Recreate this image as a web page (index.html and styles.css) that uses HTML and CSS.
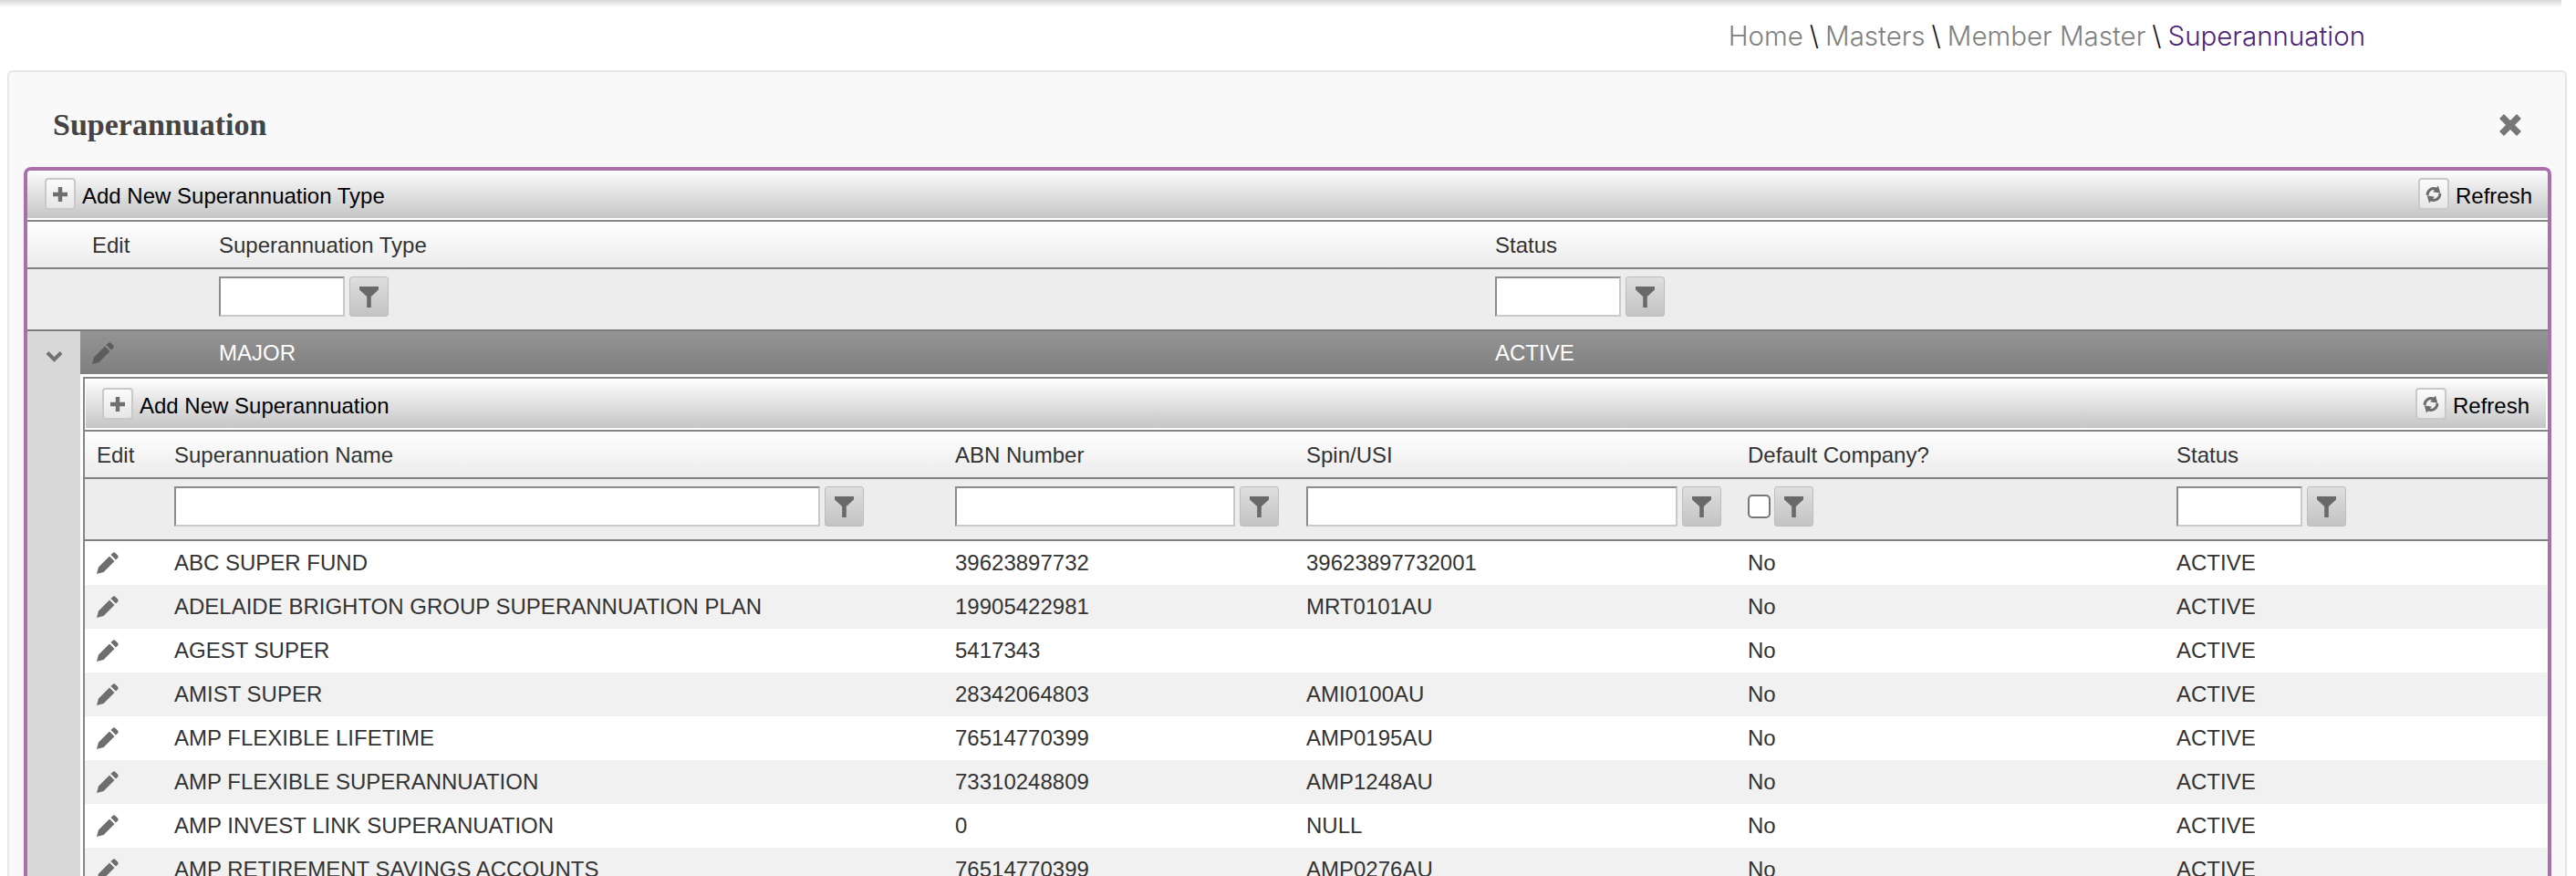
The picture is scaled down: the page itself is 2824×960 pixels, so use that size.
FILE: index.html
```html
<!DOCTYPE html>
<html lang="en">
<head>
<meta charset="utf-8">
<title>Superannuation</title>
<link rel="stylesheet" href="styles.css">
</head>
<body>
<svg class="sprites" aria-hidden="true">
  <symbol id="i-pencil" viewBox="0 0 24 24"><path d="M0 24l2-7.500L14 4.500l5.500 5.500L7.500 22zM15.500 3l1.800-1.800a2.500 2.500 0 0 1 3.500 0l2 2a2.500 2.500 0 0 1 0 3.500L21 8.500z"/></symbol>
  <symbol id="i-funnel" viewBox="0 0 21 23"><path d="M0 0h21v3.500l-8.200 7.500v12H8.200V11L0 3.500z"/></symbol>
  <symbol id="i-plus" viewBox="0 0 18 18"><path d="M6.500 0h5v6.500H18v5h-6.500V18h-5v-6.500H0v-5h6.500z"/></symbol>
  <symbol id="i-refresh" viewBox="0 0 22 22">
    <path d="M3.500 12A7.500 7.500 0 0 1 14.500 4.800M18.500 10A7.500 7.500 0 0 1 7.500 17.200" fill="none" stroke="currentColor" stroke-width="3.200"/>
    <path d="M16.500 .5L19 9.500l-9-1.500zM5.500 21.500L3 12.500l9 1.500z" fill="currentColor"/>
  </symbol>
  <symbol id="i-chevron" viewBox="0 0 19 13"><path d="M2 2.500l7.500 7.500L17 2.500" fill="none" stroke="currentColor" stroke-width="4"/></symbol>
  <symbol id="i-close" viewBox="0 0 24 24"><path d="M2.500 2.500l19 19M21.500 2.500l-19 19" fill="none" stroke="currentColor" stroke-width="7"/></symbol>
</svg>

<div class="page">
  <div class="topbar"></div>
  <nav class="crumbs">
    <span class="crumb">Home</span><span class="sep">\</span>
    <span class="crumb">Masters</span><span class="sep">\</span>
    <span class="crumb">Member Master</span><span class="sep">\</span>
    <span class="crumb current">Superannuation</span>
  </nav>

  <section class="panel">
    <header class="panel-head">
      <h1 class="panel-title">Superannuation</h1>
      <svg class="close"><use href="#i-close"/></svg>
    </header>

    <div class="grid-frame">
      <div class="toolbar">
        <span class="tool"><span class="icon-btn"><svg class="i-plus"><use href="#i-plus"/></svg></span><span class="tool-label">Add New Superannuation Type</span></span>
        <span class="tool"><span class="icon-btn narrow"><svg class="i-refresh"><use href="#i-refresh"/></svg></span><span class="tool-label">Refresh</span></span>
      </div>

      <div class="cols-outer head">
        <div></div><div class="pad-edit">Edit</div><div>Superannuation Type</div><div>Status</div>
      </div>
      <div class="cols-outer filters">
        <div></div><div></div>
        <div class="filter"><input class="w-type" type="text" aria-label="Superannuation Type"><span class="filter-btn"><svg class="i-funnel"><use href="#i-funnel"/></svg></span></div>
        <div class="filter"><input class="w-type" type="text" aria-label="Status"><span class="filter-btn"><svg class="i-funnel"><use href="#i-funnel"/></svg></span></div>
      </div>

      <div class="cols-outer master">
        <div class="expander"><svg class="i-chevron"><use href="#i-chevron"/></svg></div>
        <div class="pad-edit"><svg class="i-pencil dark"><use href="#i-pencil"/></svg></div>
        <div>MAJOR</div><div>ACTIVE</div>
      </div>

      <div class="detail">
        <div class="detail-gutter"></div>
        <div class="nested">
          <div class="toolbar">
            <span class="tool"><span class="icon-btn"><svg class="i-plus"><use href="#i-plus"/></svg></span><span class="tool-label">Add New Superannuation</span></span>
            <span class="tool"><span class="icon-btn narrow"><svg class="i-refresh"><use href="#i-refresh"/></svg></span><span class="tool-label">Refresh</span></span>
          </div>

          <div class="cols-inner head">
            <div class="pad-edit">Edit</div><div>Superannuation Name</div><div>ABN Number</div><div>Spin/USI</div><div>Default Company?</div><div>Status</div>
          </div>
          <div class="cols-inner filters ruled">
            <div></div>
            <div class="filter"><input class="w-name" type="text" aria-label="Superannuation Name"><span class="filter-btn"><svg class="i-funnel"><use href="#i-funnel"/></svg></span></div>
            <div class="filter"><input class="w-abn" type="text" aria-label="ABN Number"><span class="filter-btn"><svg class="i-funnel"><use href="#i-funnel"/></svg></span></div>
            <div class="filter"><input class="w-spin" type="text" aria-label="Spin/USI"><span class="filter-btn"><svg class="i-funnel"><use href="#i-funnel"/></svg></span></div>
            <div class="filter tight"><input class="check" type="checkbox" aria-label="Default Company?"><span class="filter-btn"><svg class="i-funnel"><use href="#i-funnel"/></svg></span></div>
            <div class="filter"><input class="w-type" type="text" aria-label="Status"><span class="filter-btn"><svg class="i-funnel"><use href="#i-funnel"/></svg></span></div>
          </div>

          <div class="cols-inner row"><div class="pad-edit"><svg class="i-pencil"><use href="#i-pencil"/></svg></div><div>ABC SUPER FUND</div><div>39623897732</div><div>39623897732001</div><div>No</div><div>ACTIVE</div></div>
          <div class="cols-inner row"><div class="pad-edit"><svg class="i-pencil"><use href="#i-pencil"/></svg></div><div>ADELAIDE BRIGHTON GROUP SUPERANNUATION PLAN</div><div>19905422981</div><div>MRT0101AU</div><div>No</div><div>ACTIVE</div></div>
          <div class="cols-inner row"><div class="pad-edit"><svg class="i-pencil"><use href="#i-pencil"/></svg></div><div>AGEST SUPER</div><div>5417343</div><div></div><div>No</div><div>ACTIVE</div></div>
          <div class="cols-inner row"><div class="pad-edit"><svg class="i-pencil"><use href="#i-pencil"/></svg></div><div>AMIST SUPER</div><div>28342064803</div><div>AMI0100AU</div><div>No</div><div>ACTIVE</div></div>
          <div class="cols-inner row"><div class="pad-edit"><svg class="i-pencil"><use href="#i-pencil"/></svg></div><div>AMP FLEXIBLE LIFETIME</div><div>76514770399</div><div>AMP0195AU</div><div>No</div><div>ACTIVE</div></div>
          <div class="cols-inner row"><div class="pad-edit"><svg class="i-pencil"><use href="#i-pencil"/></svg></div><div>AMP FLEXIBLE SUPERANNUATION</div><div>73310248809</div><div>AMP1248AU</div><div>No</div><div>ACTIVE</div></div>
          <div class="cols-inner row"><div class="pad-edit"><svg class="i-pencil"><use href="#i-pencil"/></svg></div><div>AMP INVEST LINK SUPERANUATION</div><div>0</div><div>NULL</div><div>No</div><div>ACTIVE</div></div>
          <div class="cols-inner row"><div class="pad-edit"><svg class="i-pencil"><use href="#i-pencil"/></svg></div><div>AMP RETIREMENT SAVINGS ACCOUNTS</div><div>76514770399</div><div>AMP0276AU</div><div>No</div><div>ACTIVE</div></div>
        </div>
      </div>
    </div>
  </section>
</div>
</body>
</html>
```
FILE: styles.css
```css
* { box-sizing: border-box; }
html, body { margin: 0; height: 960px; overflow: hidden; background: #fff; }
body { font-family: "Liberation Sans", Arial, sans-serif; font-size: 24px; color: #333; }
.sprites { display: none; }
.page { width: 2824px; height: 960px; overflow: hidden; }

.topbar { height: 8px; background: linear-gradient(#d8d8d8, #eeeeee 55%, #fff); margin-right: 16px; }

.crumbs { height: 69px; padding: 13px 231px 0 0; display: flex; justify-content: flex-end; align-items: flex-start; font-family: Inter, "Liberation Sans", sans-serif; font-weight: 300; font-size: 29.500px; line-height: 36px; color: #808080; }
.sep { color: #111; margin: 0 7px; }
.current { color: #4b2477; }

.panel { margin: 0 10px 0 8px; border: 2px solid #e6e6e6; border-bottom: 0; border-radius: 6px 6px 0 0; background: #f9f9f9; padding: 0 15px 0 16px; height: 900px; }
.panel-head { height: 104px; padding: 11px 33px 0 32px; display: flex; align-items: center; justify-content: space-between; }
.panel-title { margin: 0; font-family: "Liberation Serif", "Times New Roman", serif; font-weight: bold; font-size: 34px; color: #444; }
.close { width: 24px; height: 24px; color: #777; }

.grid-frame { border: 4px solid #ab6fa9; border-bottom: 0; border-radius: 8px 8px 0 0; background: #fff; height: 800px; overflow: hidden; }

.toolbar { height: 52px; margin-bottom: 2px; padding: 8px 17px 0 19px; display: flex; justify-content: space-between; align-items: flex-start; background: linear-gradient(#fcfcfc, #c5c5c5); color: #000; }
.tool { display: flex; align-items: center; height: 35px; gap: 7px; }
.tool-label { padding-top: 4px; }
.nested .toolbar { margin: 2px 2px 2px 1px; padding-left: 18px; padding-right: 18px; }

.icon-btn { width: 34px; height: 35px; display: flex; align-items: center; justify-content: center; border: 2px solid #c9c9c9; border-radius: 4px; background: linear-gradient(#fbfbfb, #e6e6e6); }
.i-plus { width: 16px; height: 16px; fill: #6f6f6f; }
.i-refresh { width: 20px; height: 20px; color: #6c6c6c; }

.cols-outer { display: grid; grid-template-columns: 58px 152px 1399px 1fr; align-items: center; }
.cols-inner { display: grid; grid-template-columns: 98px 856px 385px 484px 470px 1fr; align-items: center; }
.pad-edit { padding-left: 13px; display: flex; align-items: center; }

.head { height: 54px; padding-top: 2px; border-top: 2px solid #868686; border-bottom: 2px solid #808080; background: linear-gradient(#fff, #ebebeb); }
.filters { height: 66px; padding-top: 8px; background: #ededed; align-items: start; }
.filters.ruled { height: 68px; border-bottom: 2px solid #808080; }
.filter { display: flex; align-items: center; gap: 5px; }
.filter.tight { gap: 4px; }
.filter input[type="text"] { height: 44px; border: 2px solid; border-color: #8c8c8c #c9c9c9 #c9c9c9 #8c8c8c; background: #fff; padding: 0; margin: 0; }
.w-type { width: 138px; }
.w-name { width: 708px; }
.w-abn { width: 307px; }
.w-spin { width: 407px; }
.check { appearance: none; width: 25px; height: 26px; margin: 0; border: 2px solid #777; border-radius: 5px; background: #fff; }
.filter-btn { width: 43px; height: 44px; display: flex; align-items: center; justify-content: center; border: 1px solid #bdbdbd; border-radius: 3px; background: linear-gradient(#dedede, #c3c3c3); }
.i-funnel { width: 21px; height: 23px; fill: #696969; }

.master { height: 49px; border-top: 2px solid #7c7c7c; background: linear-gradient(#949494, #7f7f7f); color: #fff; }
.master > div { height: 47px; display: flex; align-items: center; }
.master > .expander { background: #d8d8d8; justify-content: center; padding-top: 7px; }
.i-chevron { width: 19px; height: 13px; color: #727272; }
.i-pencil { width: 24px; height: 24px; fill: #6e6e6e; }
.i-pencil.dark { fill: #5c5c5c; }

.detail { display: flex; }
.detail-gutter { width: 58px; flex: none; background: #d8d8d8; }
.nested { flex: 1; margin: 3px 0 0 3px; border-top: 2px solid #868686; border-left: 2px solid #868686; background: #fff; }

.row { height: 48px; }
.row:nth-child(odd) { background: #f1f1f1; }
```
